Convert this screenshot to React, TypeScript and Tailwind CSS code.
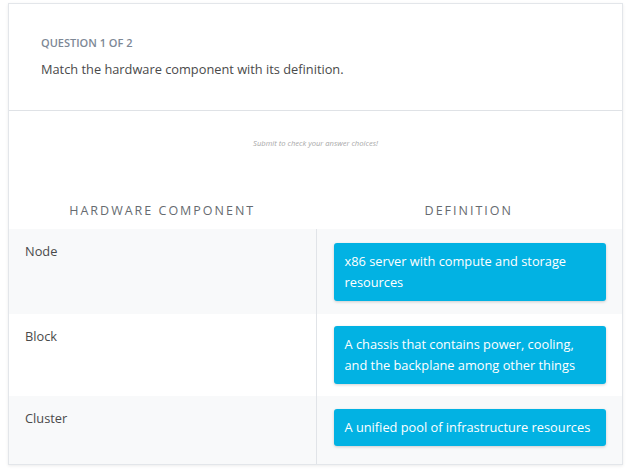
const rows = [
  { term: "Node", def: "x86 server with compute and storage resources", shade: true, pad: "pt-[14px] pb-[13px]" },
  { term: "Block", def: "A chassis that contains power, cooling, and the backplane among other things", shade: false, pad: "pt-[12px] pb-[12px]" },
  { term: "Cluster", def: "A unified pool of infrastructure resources", shade: true, pad: "pt-[13px] pb-[18px]" },
];

export default function App() {
  return (
    <div className="min-h-[471px] w-[629px] bg-white pt-[3px] pl-[8px] font-['Open_Sans',sans-serif]">
      <div className="w-[615px] border border-[#e3e6ea] bg-white shadow-[0_1px_3px_rgba(0,0,0,0.08)]">
        {/* question header */}
        <div className="h-[107px] border-b border-[#dfe2e6] pl-[32px] pt-[32px]">
          <div className="text-[11px] font-semibold uppercase leading-[14px] text-[#7d8896]">
            Question 1 of 2
          </div>
          <div className="mt-[10px] text-[12.8px] leading-[18px] text-[#4a4a4a]">
            Match the hardware component with its definition.
          </div>
        </div>

        <div className="pt-[27px] text-center text-[7.6px] italic leading-[10px] text-[#a8a8a8]">
          Submit to check your answer choices!
        </div>

        {/* column headings */}
        <div className="mt-[55px] grid grid-cols-2 pb-[10px]">
          <div className="text-center text-[12.5px] uppercase leading-[16px] tracking-[2px] text-[#666b70]">
            Hardware Component
          </div>
          <div className="text-center text-[12.5px] uppercase leading-[16px] tracking-[2px] text-[#666b70]">
            Definition
          </div>
        </div>

        {rows.map((r) => (
          <div key={r.term} className={`grid grid-cols-2 ${r.shade ? "bg-[#f8f9fa]" : "bg-white"}`}>
            <div className="pl-[16px] pt-[13px] text-[12.8px] leading-[18px] text-[#4a4a4a]">{r.term}</div>
            <div className={`border-l border-[#e1e4e8] pl-[17px] ${r.pad}`}>
              <div className="w-[272px] rounded-[3px] bg-[#02b2e3] px-[11px] py-[8px] text-[12.8px] font-medium leading-[21px] text-white shadow-[0_1px_3px_rgba(0,0,0,0.18)]">
                {r.def}
              </div>
            </div>
          </div>
        ))}
      </div>
    </div>
  );
}
